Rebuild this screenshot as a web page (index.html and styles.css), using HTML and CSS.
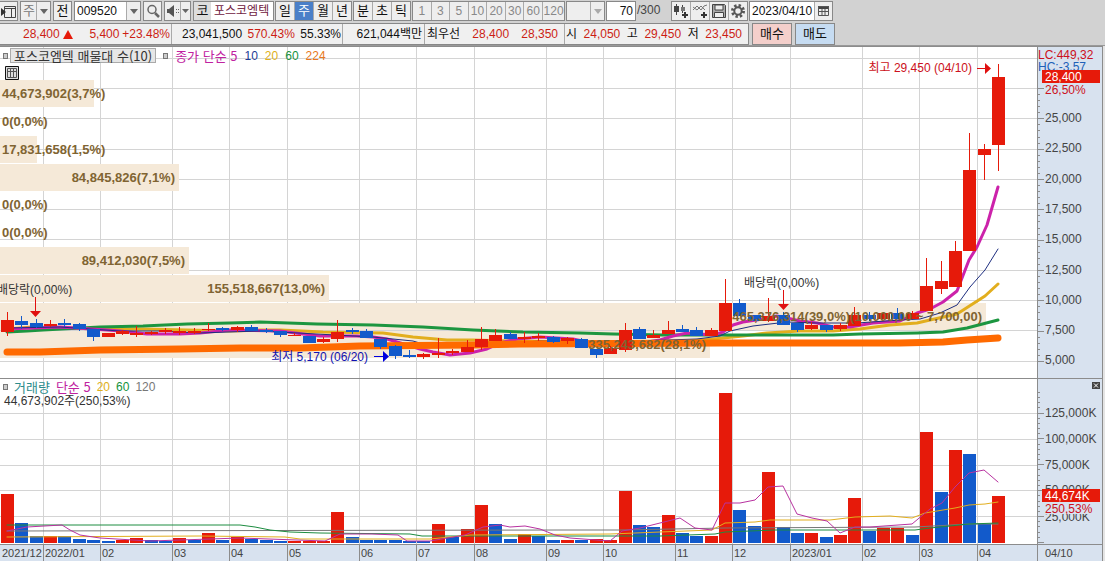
FILE: index.html
```html
<!DOCTYPE html>
<html lang="ko">
<head>
<meta charset="utf-8">
<title>포스코엠텍 주식 차트</title>
<link rel="stylesheet" href="styles.css">
</head>
<body>
<header class="bars">
  <form class="toolbar">
    <div class="lead">
      <button type="button" class="btn first" aria-label="창 열기"><svg width="15" height="15" viewBox="0 0 15 15"><path d="M3.500 2.500h11v11h-11zM3 4.500h12M10.500 4v9" fill="none" stroke="#444"/><path d="M0 4l5 4-5 4z" fill="#333"/></svg></button>
      <span class="combo cycle"><select aria-label="주기"><option>주</option></select><span class="arrow"><svg width="8" height="5"><path d="M0 0h8l-4 5z"/></svg></span></span>
      <button type="button" class="btn">전</button>
      <span class="combo code"><input aria-label="종목코드" value="009520"><span class="arrow"><svg width="8" height="5"><path d="M0 0h8l-4 5z"/></svg></span></span>
      <button type="button" class="btn" aria-label="종목 검색"><svg width="14" height="14" viewBox="0 0 14 14" fill="none" stroke="#666"><circle cx="6" cy="5.500" r="4" stroke-width="1.500"/><path d="M9 9l4 4" stroke-width="2.500"/></svg></button>
      <span class="combo sound"><button type="button" class="plain" aria-label="소리"><svg width="14" height="14" viewBox="0 0 14 14"><path d="M1 5h2l5-4v12L3 9H1z" fill="#555"/><path d="M10 5h1v1h-1zM12 5h1v1h-1zM10 8h1v1h-1zM12 8h1v1h-1z" fill="#666"/></svg></button><span class="arrow slim"><svg width="7" height="4"><path d="M0 0h7l-3.500 4z"/></svg></span></span>
      <span class="stock"><b>코</b><em>포스코엠텍</em></span>
    </div>
    <span class="group four"><button type="button">일</button><button type="button" class="on">주</button><button type="button">월</button><button type="button">년</button></span>
    <span class="group three"><button type="button">분</button><button type="button">초</button><button type="button">틱</button></span>
    <span class="group off"><button type="button">1</button><button type="button">3</button><button type="button">5</button><button type="button">10</button><button type="button">20</button><button type="button">30</button><button type="button">60</button><button type="button">120</button></span>
    <span class="combo blank"><select aria-label="분 단위" disabled><option></option></select><span class="arrow"><svg width="8" height="5"><path d="M0 0h8l-4 5z"/></svg></span></span>
    <input class="count" aria-label="봉 개수" value="70">
    <span class="total">/300</span>
    <span class="group four tools">
      <button type="button" aria-label="차트 추가"><svg width="16" height="16" viewBox="0 0 16 16"><path d="M3.500 1v11M9.500 2v8" stroke="#444"/><path d="M1 3h5v6H1z" fill="#444"/><path d="M8 4h4v4H8z" fill="#777"/><path d="M12 9v6M9 12h6" stroke="#333" stroke-width="2"/></svg></button>
      <button type="button" aria-label="지표 추가"><svg width="16" height="16" viewBox="0 0 16 16"><path d="M1 7l4-4 4 4 3-4 3-1M1 4l4 3 4-4 4 4" fill="none" stroke="#777"/><path d="M12 9v6M9 12h6" stroke="#333" stroke-width="2"/></svg></button>
      <button type="button" aria-label="저장"><svg width="16" height="16" viewBox="0 0 16 16"><path d="M1.500 1.500h12l1 1v12h-13z" fill="#aaa" stroke="#444"/><path d="M4 2h8v5H4zM3.500 9.500h9v5h-9z" fill="#eee" stroke="#444"/></svg></button>
      <button type="button" aria-label="설정"><svg width="16" height="16" viewBox="0 0 16 16"><circle cx="8" cy="8" r="5.500" fill="none" stroke="#555" stroke-width="3" stroke-dasharray="2.300 2"/><circle cx="8" cy="8" r="3.700" fill="none" stroke="#555" stroke-width="2"/></svg></button>
    </span>
    <span class="combo date"><input aria-label="날짜" value="2023/04/10"><button type="button" class="plain" aria-label="달력"><svg width="13" height="12" viewBox="0 0 13 12"><path d="M1 1h11v3H1z" fill="#444"/><path d="M1.500 1.500h10v9h-10zM1 6.500h11M5 4v7M8 4v7" fill="none" stroke="#555"/></svg></button></span>
  </form>
  <div class="quote">
    <div class="cells">
      <div class="cell c1 red"><span>28,400</span><svg width="10" height="9"><path d="M5 0l5 9H0z" fill="#e61a0a"/></svg><span>5,400</span><span>+23.48%</span></div>
      <div class="cell c2"><span>23,041,500</span><span class="red">570.43%</span><span>55.33%</span></div>
      <div class="cell c3"><span>621,044백만</span></div>
      <div class="cell c4"><span>최우선</span><span class="red">28,400</span><span class="red">28,350</span></div>
      <div class="cell c5"><span>시</span><span class="red">24,050</span><span>고</span><span class="red">29,450</span><span>저</span><span class="red">23,450</span></div>
    </div>
    <button type="button" class="trade buy">매수</button>
    <button type="button" class="trade sell">매도</button>
  </div>
</header>
<main class="chart">
  <svg id="plot" class="plot" viewBox="0 46 1105 515" role="img" aria-label="포스코엠텍 주봉 차트"></svg>
  <div class="legend price">
    <i class="dot"></i><button type="button" class="tag">포스코엠텍 매물대 수(10)</button><i class="dot"></i>
    <span class="name ma5">종가 단순 5</span><span class="ma10">10</span><span class="ma20">20</span><span class="ma60">60</span><span class="ma224">224</span>
  </div>
  <button type="button" class="gridbtn" aria-label="표 보기"><svg width="14" height="14" viewBox="0 0 14 14"><path d="M.5.5h13v13H.5z" fill="#ddd" stroke="#111"/><path d="M2.500 2.500h9v9h-9zM2 5.500h10M5.500 3v9M8.500 3v9" fill="none" stroke="#555"/></svg></button>
  <div class="legend volume">
    <i class="dot"></i><span class="name vol">거래량</span><span class="name ma5">단순 5</span><span class="ma20">20</span><span class="ma60">60</span><span class="ma120">120</span>
  </div>
</main>
<script src="chart.js"></script>
</body>
</html>
```
FILE: styles.css
```css
* { box-sizing: border-box; }
body {
  margin: 0;
  background: #d2d2d2;
  color: #111;
  font-family: "Liberation Sans", "Noto Sans CJK KR", sans-serif;
  font-size: 12px;
}
button, input, select { font: inherit; color: inherit; margin: 0; padding: 0; border: 0; border-radius: 0; background: none; min-width: 0; }
svg { display: block; }

.toolbar { display: flex; align-items: stretch; gap: 1px; height: 21px; padding-bottom: 1px; line-height: 18px; }
.lead { display: flex; gap: 2px; }
.btn, .combo, .stock, .group { border: 1px solid #888; background: #eee; }
.btn { width: 19px; display: grid; place-items: center; font-size: 13px; }
.btn.first { width: 18px; border-left: 0; }
.combo { display: flex; }
.combo > select, .combo > input { flex: 1; width: 0; appearance: none; opacity: 1; }
.arrow { width: 14px; display: grid; place-items: center; border-left: 1px solid #aaa; fill: #666; background: #eee; }
.arrow.slim { width: 10px; }
.cycle { width: 31px; color: #777; font-size: 13px; }
.cycle select { padding-left: 2px; }
.code { width: 67px; background: #fff; }
.code input { padding-left: 2px; }
.sound { width: 27px; }
.plain { flex: 1; display: grid; place-items: center; }
.stock { display: flex; width: 81px; background: #fff; overflow: hidden; white-space: nowrap; }
.stock b { width: 17px; text-align: center; background: #ddd; font-weight: 400; font-size: 13px; }
.stock em { padding-left: 3px; font-style: normal; color: #702040; }
.group { display: flex; }
.group button { flex: 1; border-right: 1px solid #aaa; font-size: 13px; white-space: nowrap; }
.group button:last-child { border-right: 0; }
.group .on { background: #4a7fc8; color: #fff; }
.four { width: 77px; }
.three { width: 58px; }
.group.off { color: #888; width: 153px; }
.group.off button { font-size: 12px; }
.group.off button:last-child { flex: none; width: 21px; }
.blank { width: 39px; }
.blank .arrow { fill: #aaa; }
.count { width: 30px; border: 1px solid #888; background: #fff; text-align: right; padding-right: 2px; }
.total { color: #444; width: 33px; }
.tools button { display: grid; place-items: center; }
.date { width: 84px; background: #fff; }
.date input { flex: none; width: 64px; padding-left: 2px; }
.date .plain { border-left: 1px solid #aaa; background: #eee; }

.quote { display: flex; gap: 3px; height: 23px; padding: 1px 0 0; line-height: 20px; }
.bars { height: 46px; padding-top: 1px; border-bottom: 1px solid #999; }
.cells { display: flex; border: 1px solid #888; border-left: 0; background: #f0f0f0; }
.cell { display: flex; align-items: center; border-right: 1px solid #aaa; justify-content: space-between; white-space: nowrap; }
.cell:last-child { border-right: 0; }
.red { color: #cc1e14; }
.c1 { width: 172px; padding: 0 1px 0 23px; }
.c1 svg { margin-right: 14px; }
.c2 { width: 171px; padding: 0 1px 0 10px; }
.c3 { width: 82px; padding-right: 2px; justify-content: flex-end; }
.c4 { width: 140px; padding: 0 6px 0 2px; }
.c5 { width: 183px; padding: 0 6px 0 1px; }
.trade { width: 40px; border: 1px solid #888; font-size: 13px; }
.buy { background: #f4cfcb; }
.sell { background: #c6dcf2; }

.chart { position: relative; }
.plot { width: 100%; height: auto; font-size: 12px; }
.legend { position: absolute; left: 3px; display: flex; align-items: center; line-height: 14px; white-space: nowrap; }
.legend.price { top: 2px; gap: 7px; }
.legend.volume { top: 334px; gap: 6px; }
.dot { width: 5px; height: 6px; border: 1px solid #777; background: #ccc; }
.name, .tag { font-family: "Noto Sans CJK KR", sans-serif; font-size: 13px; }
.tag { border: 1px solid #aaa; background: #e6e6e6; color: #333; height: 15px; line-height: 12px; padding: 0 3px; margin-left: -5px; }
.gridbtn { position: absolute; left: 5px; top: 20px; }
.vol { color: #2c8c8c; }
.ma5 { color: #c022a0; }
.ma10 { color: #1c3c96; }
.ma20 { color: #e0b020; }
.ma60 { color: #14923c; }
.ma120 { color: #777; }
.ma224 { color: #e87820; }

.bold { font-weight: bold; font-size: 13px; fill: #806432; }
.axis { fill: #444; }
.num { font-size: 11px; }
.note { fill: #333; }
.high { fill: #cc1020; }
.low { fill: #1010b0; }
.white { fill: #fff; }
.hc { fill: #2060b8; }
.line { fill: none; stroke-linejoin: round; stroke-linecap: round; }
```
FILE: chart.js
```js
const NS = 'http://www.w3.org/2000/svg';
const plot = document.getElementById('plot');
const add = (tag, attrs, text) => {
  const el = document.createElementNS(NS, tag);
  for (const k in attrs) el.setAttribute(k, attrs[k]);
  if (text !== undefined) el.textContent = text;
  plot.appendChild(el);
};
const rect = (x, y, width, height, fill) => add('rect', { x, y, width, height, fill });
const text = (x, mid, cls, s, anchor = 'start') =>
  add('text', { x, y: mid + 5, class: cls, 'text-anchor': anchor }, s);
const line = (points, stroke, width) =>
  add('polyline', { points, stroke, 'stroke-width': width, class: 'line' });

const RED = '#e61a0a', BLUE = '#125acb', GRID = '#d4d4d4', AXIS = '#d8e2ef', EDGE = '#8c8c8c';
const xAt = i => Math.round(7 + i * 14.362);

rect(0, 46, 1038, 498, '#fff');
rect(1038, 46, 64, 515, AXIS);
rect(0, 544, 1102, 17, AXIS);
rect(1102, 46, 3, 515, '#e4e4e4');

const months = [[43, '2022/01'], [100, '02'], [172, '03'], [229, '04'], [287, '05'], [359, '06'], [416, '07'], [474, '08'],
  [546, '09'], [603, '10'], [675, '11'], [732, '12'], [790, '2023/01'], [862, '02'], [919, '03'], [977, '04']];
months.forEach(([x]) => rect(x, 47, 1, 497, GRID));
[58, 88, 118, 149, 179, 209, 239, 270, 300, 330, 361, 413, 439, 465, 490, 516].forEach(y => rect(0, y, 1037, 1, GRID));

/* volume by price */
[[80, 94], [136, 37], [164, 179], [247, 189], [275, 329], [303, 986], [331, 710]].forEach(([y, w]) => rect(0, y, w, 27, '#f5e9d8'));

/* moving averages on price */
line('7,329 33,327 67,328 100,329 143,329 187,330 230,331 260,330 280,330 323,332 383,333 413,337 447,340 473,340 510,341 600,342 690,341 713,339 743,336 767,333 800,331 833,331 860,329 890,325 917,323 930,320 957,314 985,296 998,284', '#e2ae1e', 3);
line('7,332 27,331 43,330 100,327 143,326 187,324 230,323 260,322 317,324 373,325 423,327 473,330 523,332 580,333 613,334 663,335 833,335 860,334 917,333 943,332 967,328 998,320', '#1c9640', 3);
line('7,329 33,328 60,327 107,330 120,331 147,334 180,334 200,333 230,330 280,331 303,334 320,336 357,336 373,337 387,339 407,345 420,349 433,352 450,355 470,353 487,349 500,343 517,339 540,337 573,339 587,342 607,345 623,345 647,342 660,340 673,336 687,333 713,335 723,332 733,325 743,322 763,319 777,316 787,318 800,321 817,323 833,327 850,327 873,323 900,321 917,313 930,309 943,302 957,291 969,260 977,247 987,225 998,187', '#cc22aa', 3);
line('7,328 60,327 120,331 160,331 200,333 228,332 260,331 373,337 413,341 430,346 480,345 540,341 600,342 667,340 697,339 720,336 730,331 753,326 770,324 787,322 817,323 857,323 900,320 920,319 940,313 957,305 970,287 985,270 998,249', '#1e2e80', 1);
line('7,352 40,352 100,350 180,349 240,348 300,348 360,346 473,345 520,344 720,343 900,343 943,342 967,340 998,338', '#ff6a00', 7);

/* direction, body top, body bottom, high, low */
const candles = `R 320 332 312 336|B 321 325 316 329|B 323 327 319 328|R 324 326 320 327|B 323 325 319 327|B 324 329 323 331|B 329 337 329 341|R 333 337 333 337|R 331 334 330 335|R 333 335 326 337|R 332 334 331 335|R 330 332 328 334|R 331 333 327 335|R 331 333 328 334|R 329 330 323 331|B 328 330 327 331|R 327 330 326 332|B 327 331 325 331|B 330 332 328 333|B 331 335 331 337|R 335 336 333 336|B 336 343 336 343|R 339 342 337 343|R 332 339 320 342|B 330 332 328 334|B 331 338 329 338|B 339 347 339 349|B 346 356 345 359|B 355 357 350 358|R 354 357 353 359|R 353 355 338 358|R 351 353 349 355|R 347 352 340 352|R 339 347 327 350|R 335 341 329 341|B 334 339 332 339|R 337 339 332 343|R 336 338 333 341|B 337 342 336 343|R 338 341 337 344|B 339 348 338 348|B 349 355 349 358|R 348 354 346 354|R 330 350 323 352|B 329 339 327 339|R 335 338 330 338|R 330 334 321 334|B 329 332 325 332|B 330 336 327 336|R 330 336 328 336|R 303 331 279 331|B 303 316 299 316|B 315 321 315 321|R 316 321 298 322|B 315 325 312 325|B 323 330 323 332|R 325 329 322 330|B 325 330 325 332|R 325 329 323 331|R 315 326 307 326|B 315 319 312 321|R 313 319 313 319|B 313 319 308 319|R 313 319 311 319|R 286 311 258 311|R 281 289 261 294|R 251 287 241 287|R 170 251 133 251|R 149 155 144 180|R 77 145 64 171`.split('|').map(s => s.split(' '));
const volumeTop = [494, 523, 536, 536, 536, 539, 540, 541, 540, 538, 540, 541, 538, 540, 533, 540, 537, 539, 540, 541, 541, 541, 541, 512, 537, 540, 540, 540, 541, 541, 524, 537, 529, 505, 524, 539, 534, 536, 540, 540, 540, 539, 540, 491, 525, 527, 515, 533, 536, 536, 393, 510, 526, 472, 527, 533, 533, 537, 535, 498, 531, 528, 528, 535, 432, 492, 450, 454, 524, 496];
/* weekly open-close colours and volume colours differ on these bars */
const flipped = new Set([7, 10, 11, 13, 21, 29, 31, 34, 37, 41, 45, 56, 62, 63, 65, 67, 68]);
flipped.delete(56);
candles.forEach(([dir, top, bottom, high, low], i) => {
  const x = xAt(i), color = dir === 'R' ? RED : BLUE;
  const volumeColor = (dir === 'R') !== flipped.has(i) ? RED : BLUE;
  rect(x, +high, 1, low - high, color);
  rect(x - 6, +top, 13, bottom - top, color);
  rect(x - 6, volumeTop[i], 13, 543 - volumeTop[i], volumeColor);
});

/* moving averages on volume */
line('7,531 560,530 620,530 725,528 915,527 969,524 998,524', '#777', 1);
line('7,525 240,525 255,527 270,530 290,532 320,533 410,534 422,536 660,536 715,534 725,532 775,530 915,530 930,528 950,526 969,524 998,523', '#1c8c40', 1);
line('7,537 200,536 285,537 300,539 430,539 470,535 610,534 660,532 712,530 725,523 755,522 770,520 830,520 855,517 890,516 912,518 925,513 955,508 969,505 985,504 998,502', '#e2ae1e', 1);
line('7,531 27,527 62,525 70,530 80,535 100,538 150,541 240,538 325,541 340,534 372,534 398,535 407,541 430,541 465,535 483,527 500,525 510,527 525,526 540,529 555,535 570,538 610,541 622,531 640,528 660,523 680,518 695,528 712,530 725,503 740,503 755,500 768,487 783,486 797,514 812,518 827,521 840,533 855,527 870,527 912,524 930,509 942,503 955,487 969,473 984,470 998,482', '#b832a0', 1);

text(2, 93, 'bold', '44,673,902(3,7%)');
text(2, 121, 'bold', '0(0,0%)');
text(2, 149, 'bold', '17,831,658(1,5%)');
text(175, 177, 'bold', '84,845,826(7,1%)', 'end');
text(2, 204, 'bold', '0(0,0%)');
text(2, 232, 'bold', '0(0,0%)');
text(185, 260, 'bold', '89,412,030(7,5%)', 'end');
text(325, 288, 'bold', '155,518,667(13,0%)', 'end');
text(982, 316, 'bold', '465,376,314(39,0%)(10,000,00 ~ 7,700,00)', 'end');
text(706, 344, 'bold', '335,243,682(28,1%)', 'end');

/* notes */
text(-3, 289, 'note', '배당락(0,00%)');
text(744, 282, 'note', '배당락(0,00%)');
text(972, 67, 'high', '최고 29,450 (04/10)', 'end');
text(368, 356, 'low', '최저 5,170 (06/20)', 'end');
add('path', { d: 'M35 297h1v14h5l-5.500 6-5.500-6h5zM783 290h1v14h5l-5.500 6-5.500-6h5zM977 68h8v-5l6 5.500-6 5.500v-5h-8z', fill: '#e01010' });
add('path', { d: 'M374 356h9v-5l6 5.500-6 5.500v-5h-9z', fill: '#0000e0' });
text(4, 400, 'note', '44,673,902주(250,53%)');

/* frame and axes */
rect(0, 46, 1103, 1, EDGE);
rect(0, 378, 1102, 1, EDGE);
rect(0, 544, 1102, 1, EDGE);
rect(1037, 46, 1, 515, EDGE);
rect(1102, 46, 1, 515, EDGE);
for (let i = 0; i <= 45; i++) { const y = Math.round(361 - i * 6.067); if (y > 85) rect(1038, y, i % 5 ? 2 : 6, 1, EDGE); }
for (let i = 0; i <= 29; i++) rect(1038, Math.round(542 - i * 5.18), i % 5 ? 2 : 6, 1, EDGE);
['25,000', '22,500', '20,000', '17,500', '15,000', '12,500', '10,000', '7,500', '5,000'].forEach((s, i) => text(1045, Math.round(117 + i * 30.3), 'axis', s));
[[412, '125,000K'], [438, '100,000K'], [464, '75,000K'], [489, '50,000K'], [516, '25,000K']].forEach(([y, s]) => text(1045, y, 'axis', s));
text(1038, 54, 'high', 'LC:449,32');
text(1038, 66, 'hc', 'HC:-3,57');
rect(1042, 70, 58, 13, RED);
text(1045, 76, 'white', '28,400');
text(1045, 89, 'high', '26,50%');
rect(1042, 501, 58, 13, AXIS);
rect(1042, 489, 58, 13, RED);
text(1045, 495, 'white', '44,674K');
text(1045, 508, 'high', '250,53%');
rect(1092, 382, 8, 7, '#444');
add('path', { d: 'M1094 383.500l4 4M1098 383.500l-4 4', stroke: '#fff' });

months.forEach(([x, s]) => { rect(x, 544, 1, 17, EDGE); text(x + 2, 552, 'axis num', s); });
text(2, 552, 'axis num', '2021/12');
text(1045, 552, 'axis num', '04/10');
```
